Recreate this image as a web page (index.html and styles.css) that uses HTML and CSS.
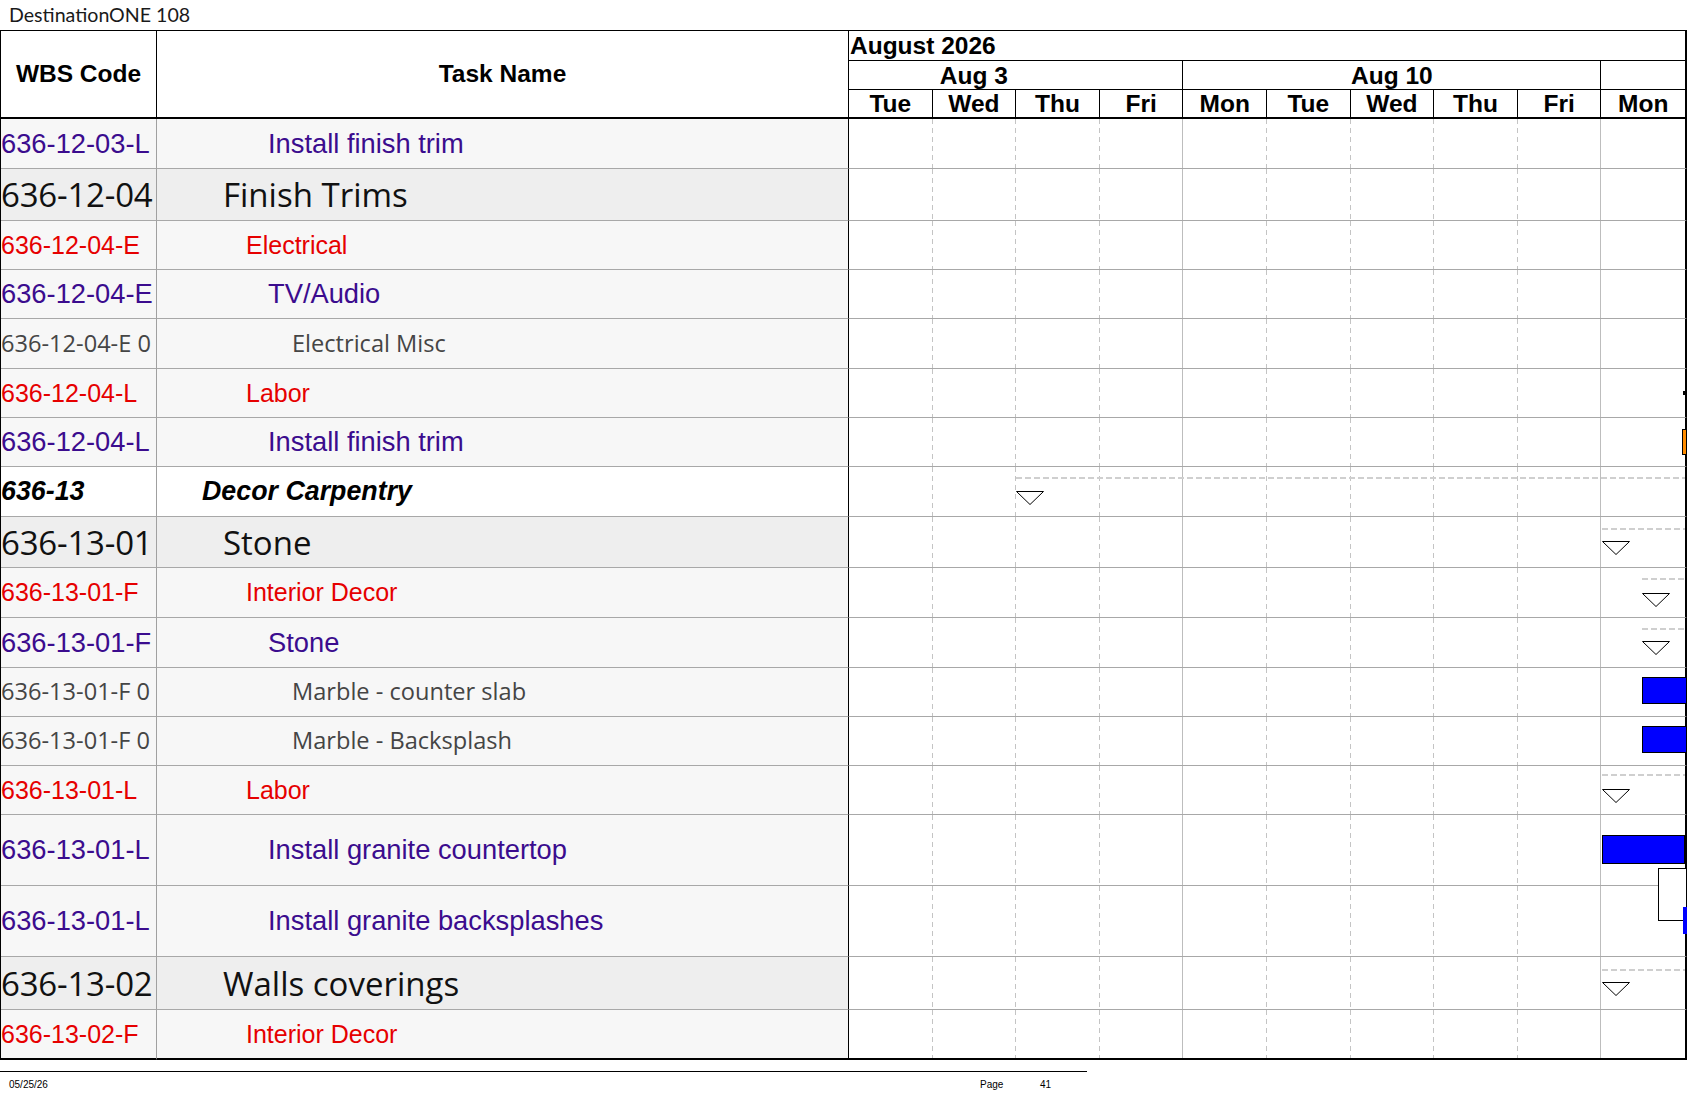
FILE: index.html
```html
<!DOCTYPE html>
<html>
<head>
<meta charset="utf-8">
<title>DestinationONE 108</title>
<link rel="stylesheet" href="styles.css">
</head>
<body>
<div class="page">
  <div class="title">DestinationONE 108</div>
  <div class="sheet">
    <div class="head">
      <div class="hcode">WBS Code</div>
      <div class="htask">Task Name</div>
      <div class="hgantt">
        <div class="month">August 2026</div>
        <div class="weeks">
          <div class="wk wk1">Aug 3</div>
          <div class="wk wk2">Aug 10</div>
          <div class="wk wk3"></div>
        </div>
        <div class="days">
          <div>Tue</div><div>Wed</div><div>Thu</div><div>Fri</div><div>Mon</div>
          <div>Tue</div><div>Wed</div><div>Thu</div><div>Fri</div><div>Mon</div>
        </div>
      </div>
    </div>

    <div class="row l3 h50">
      <div class="code">636-12-03-L</div><div class="task">Install finish trim</div>
      <div class="gantt"><div class="d"></div><div class="d"></div><div class="d"></div><div class="d w"></div><div class="d"></div><div class="d"></div><div class="d"></div><div class="d"></div><div class="d w"></div><div class="d last"></div></div>
    </div>
    <div class="row l1 h52">
      <div class="code">636-12-04</div><div class="task">Finish Trims</div>
      <div class="gantt"><div class="d"></div><div class="d"></div><div class="d"></div><div class="d w"></div><div class="d"></div><div class="d"></div><div class="d"></div><div class="d"></div><div class="d w"></div><div class="d last"></div></div>
    </div>
    <div class="row l2 h49">
      <div class="code">636-12-04-E</div><div class="task">Electrical</div>
      <div class="gantt"><div class="d"></div><div class="d"></div><div class="d"></div><div class="d w"></div><div class="d"></div><div class="d"></div><div class="d"></div><div class="d"></div><div class="d w"></div><div class="d last"></div></div>
    </div>
    <div class="row l3 h49">
      <div class="code">636-12-04-E</div><div class="task">TV/Audio</div>
      <div class="gantt"><div class="d"></div><div class="d"></div><div class="d"></div><div class="d w"></div><div class="d"></div><div class="d"></div><div class="d"></div><div class="d"></div><div class="d w"></div><div class="d last"></div></div>
    </div>
    <div class="row l4 h50">
      <div class="code">636-12-04-E 0</div><div class="task">Electrical Misc</div>
      <div class="gantt"><div class="d"></div><div class="d"></div><div class="d"></div><div class="d w"></div><div class="d"></div><div class="d"></div><div class="d"></div><div class="d"></div><div class="d w"></div><div class="d last"></div></div>
    </div>
    <div class="row l2 h49">
      <div class="code">636-12-04-L</div><div class="task">Labor</div>
      <div class="gantt"><div class="d"></div><div class="d"></div><div class="d"></div><div class="d w"></div><div class="d"></div><div class="d"></div><div class="d"></div><div class="d"></div><div class="d w"></div><div class="d last"></div>
        <div class="tick"></div>
      </div>
    </div>
    <div class="row l3 h49">
      <div class="code">636-12-04-L</div><div class="task">Install finish trim</div>
      <div class="gantt"><div class="d"></div><div class="d"></div><div class="d"></div><div class="d w"></div><div class="d"></div><div class="d"></div><div class="d"></div><div class="d"></div><div class="d w"></div><div class="d last"></div>
        <div class="orange"></div>
      </div>
    </div>
    <div class="row l0 h50">
      <div class="code">636-13</div><div class="task">Decor Carpentry</div>
      <div class="gantt"><div class="d"></div><div class="d"></div><div class="d"></div><div class="d w"></div><div class="d"></div><div class="d"></div><div class="d"></div><div class="d"></div><div class="d w"></div><div class="d last"></div>
        <div class="sum m-thu t10"></div>
        <svg class="tri m-thu t24" width="28" height="15" viewBox="0 0 28 15"><polygon points="0.5,0.5 27.5,0.5 14,13.5" fill="#fff" stroke="#000" stroke-width="1"/></svg>
      </div>
    </div>
    <div class="row l1 h51">
      <div class="code">636-13-01</div><div class="task">Stone</div>
      <div class="gantt"><div class="d"></div><div class="d"></div><div class="d"></div><div class="d w"></div><div class="d"></div><div class="d"></div><div class="d"></div><div class="d"></div><div class="d w"></div><div class="d last"></div>
        <div class="sum m-mon t11"></div>
        <svg class="tri m-mon t24" width="28" height="15" viewBox="0 0 28 15"><polygon points="0.5,0.5 27.5,0.5 14,13.5" fill="#fff" stroke="#000" stroke-width="1"/></svg>
      </div>
    </div>
    <div class="row l2 h50">
      <div class="code">636-13-01-F</div><div class="task">Interior Decor</div>
      <div class="gantt"><div class="d"></div><div class="d"></div><div class="d"></div><div class="d w"></div><div class="d"></div><div class="d"></div><div class="d"></div><div class="d"></div><div class="d w"></div><div class="d last"></div>
        <div class="sum m-mid t10"></div>
        <svg class="tri m-mid t25" width="28" height="15" viewBox="0 0 28 15"><polygon points="0.5,0.5 27.5,0.5 14,13.5" fill="#fff" stroke="#000" stroke-width="1"/></svg>
      </div>
    </div>
    <div class="row l3 h50">
      <div class="code">636-13-01-F</div><div class="task">Stone</div>
      <div class="gantt"><div class="d"></div><div class="d"></div><div class="d"></div><div class="d w"></div><div class="d"></div><div class="d"></div><div class="d"></div><div class="d"></div><div class="d w"></div><div class="d last"></div>
        <div class="sum m-mid t10"></div>
        <svg class="tri m-mid t23" width="28" height="15" viewBox="0 0 28 15"><polygon points="0.5,0.5 27.5,0.5 14,13.5" fill="#fff" stroke="#000" stroke-width="1"/></svg>
      </div>
    </div>
    <div class="row l4 h49">
      <div class="code">636-13-01-F 0</div><div class="task">Marble - counter slab</div>
      <div class="gantt"><div class="d"></div><div class="d"></div><div class="d"></div><div class="d w"></div><div class="d"></div><div class="d"></div><div class="d"></div><div class="d"></div><div class="d w"></div><div class="d last"></div>
        <div class="bar bar-mid"></div>
      </div>
    </div>
    <div class="row l4 h49">
      <div class="code">636-13-01-F 0</div><div class="task">Marble - Backsplash</div>
      <div class="gantt"><div class="d"></div><div class="d"></div><div class="d"></div><div class="d w"></div><div class="d"></div><div class="d"></div><div class="d"></div><div class="d"></div><div class="d w"></div><div class="d last"></div>
        <div class="bar bar-mid"></div>
      </div>
    </div>
    <div class="row l2 h49">
      <div class="code">636-13-01-L</div><div class="task">Labor</div>
      <div class="gantt"><div class="d"></div><div class="d"></div><div class="d"></div><div class="d w"></div><div class="d"></div><div class="d"></div><div class="d"></div><div class="d"></div><div class="d w"></div><div class="d last"></div>
        <div class="sum m-mon t8"></div>
        <svg class="tri m-mon t23" width="28" height="15" viewBox="0 0 28 15"><polygon points="0.5,0.5 27.5,0.5 14,13.5" fill="#fff" stroke="#000" stroke-width="1"/></svg>
      </div>
    </div>
    <div class="row l3 h71">
      <div class="code">636-13-01-L</div><div class="task">Install granite countertop</div>
      <div class="gantt"><div class="d"></div><div class="d"></div><div class="d"></div><div class="d w"></div><div class="d"></div><div class="d"></div><div class="d"></div><div class="d"></div><div class="d w"></div><div class="d last"></div>
        <div class="bar bar-mon"></div>
        <div class="link"></div>
      </div>
    </div>
    <div class="row l3 h71">
      <div class="code">636-13-01-L</div><div class="task">Install granite backsplashes</div>
      <div class="gantt"><div class="d"></div><div class="d"></div><div class="d"></div><div class="d w"></div><div class="d"></div><div class="d"></div><div class="d"></div><div class="d"></div><div class="d w"></div><div class="d last"></div>
        <div class="strip"></div>
      </div>
    </div>
    <div class="row l1 h53">
      <div class="code">636-13-02</div><div class="task">Walls coverings</div>
      <div class="gantt"><div class="d"></div><div class="d"></div><div class="d"></div><div class="d w"></div><div class="d"></div><div class="d"></div><div class="d"></div><div class="d"></div><div class="d w"></div><div class="d last"></div>
        <div class="sum m-mon t12"></div>
        <svg class="tri m-mon t25" width="28" height="15" viewBox="0 0 28 15"><polygon points="0.5,0.5 27.5,0.5 14,13.5" fill="#fff" stroke="#000" stroke-width="1"/></svg>
      </div>
    </div>
    <div class="row l2 h50 lastrow">
      <div class="code">636-13-02-F</div><div class="task">Interior Decor</div>
      <div class="gantt"><div class="d"></div><div class="d"></div><div class="d"></div><div class="d w"></div><div class="d"></div><div class="d"></div><div class="d"></div><div class="d"></div><div class="d w"></div><div class="d last"></div></div>
    </div>
  </div>
  <div class="footer">
    <span class="fdate">05/25/26</span>
    <span class="fpage">Page</span>
    <span class="fnum">41</span>
  </div>
</div>
</body>
</html>
```

FILE: styles.css
```css
* { box-sizing: border-box; }
html, body { margin: 0; padding: 0; background: #fff; }
body { font-family: "Liberation Sans", Arial, sans-serif; color: #000; }

.page { width: 1687px; }

.title {
  height: 30px;
  padding-left: 9px;
  font-family: Lato, "Open Sans", sans-serif;
  font-size: 19.6px;
  line-height: 30px;
  color: #1a1a1a;
}

.sheet {
  width: 1687px;
  border-top: 1px solid #000;
  border-left: 1px solid #000;
}

/* header */
.head {
  display: flex;
  height: 88px;
  border-bottom: 2px solid #000;
}
.hcode, .htask {
  display: flex;
  align-items: center;
  justify-content: center;
  font-weight: bold;
  font-size: 24.5px;
  border-right: 1px solid #000;
}
.hcode { width: 156px; }
.htask { width: 692px; }
.hgantt {
  width: 838px;
  border-right: 2px solid #000;
  display: flex;
  flex-direction: column;
  font-weight: bold;
  font-size: 24.5px;
}
.month {
  height: 30px;
  line-height: 29px;
  border-bottom: 1px solid #000;
  padding-left: 1px;
}
.weeks {
  height: 29px;
  border-bottom: 1px solid #000;
  display: grid;
  grid-template-columns: repeat(10, 1fr);
}
.wk {
  border-right: 1px solid #000;
  text-align: center;
  line-height: 29px;
  white-space: nowrap;
}
.wk1 { grid-column: 1 / 5; padding-right: 83.6px; }
.wk2 { grid-column: 5 / 10; }
.wk3 { grid-column: 10 / 11; border-right: none; }
.days {
  flex: 1;
  display: grid;
  grid-template-columns: repeat(10, 1fr);
}
.days div {
  border-right: 1px solid #000;
  text-align: center;
  line-height: 28px;
}
.days div:last-child { border-right: none; }

/* body rows */
.row { display: flex; }
.row > div { border-bottom: 1px solid #a8a8a8; }
.h49 { height: 49px; }
.h50 { height: 50px; }
.h51 { height: 51px; }
.h52 { height: 52px; }
.h53 { height: 53px; }
.h71 { height: 71px; }
.lastrow > div { border-bottom: 2px solid #000; }

.code {
  width: 156px;
  border-right: 1px solid #a0a0a0;
  background: #f7f7f7;
  display: flex;
  align-items: center;
  white-space: nowrap;
  overflow: hidden;
  line-height: 1;
}
.task {
  width: 692px;
  border-right: 1px solid #000;
  background: #f7f7f7;
  display: flex;
  align-items: center;
  white-space: nowrap;
  line-height: 1;
}
.gantt {
  width: 838px;
  border-right: 2px solid #000;
  background: #fff;
  position: relative;
  display: grid;
  grid-template-columns: repeat(10, 1fr);
}
.gantt .d {
  background: linear-gradient(#c4c4c4 55%, transparent 55%) right top / 1px 9px repeat-y;
}
.gantt .d.w {
  background: linear-gradient(#bdbdbd, #bdbdbd) right top / 1px 100% no-repeat;
}
.gantt .d.last { background: none; }

/* levels */
.l0 .code, .l0 .task { background: #fff; font-weight: bold; font-style: italic; color: #000; font-size: 26.8px; }
.l0 .task { padding-left: 45px; }

.l1 .code, .l1 .task { background: #eeeeee; font-family: "Open Sans", "Noto Sans", sans-serif; color: #111; font-size: 33px; }
.l1 .code { letter-spacing: -0.2px; }
.l1 .task { padding-left: 66px; }

.l2 .code, .l2 .task { color: #e60000; font-size: 25px; }
.l2 .task { padding-left: 89px; }

.l3 .code, .l3 .task { color: #3b0c8e; font-size: 27.3px; }
.l3 .task { padding-left: 111px; }

.l4 .code, .l4 .task { font-family: "Open Sans", "Noto Sans", sans-serif; color: #454545; font-size: 23.6px; }
.l4 .task { padding-left: 135px; }

/* gantt marks */
.sum {
  position: absolute;
  right: 0;
  height: 2px;
  background: linear-gradient(to right, #cfcfcf 65%, transparent 65%) left top / 9px 2px repeat-x;
}
.tri { position: absolute; display: block; }
.m-thu { left: 167px; }
.m-mon { left: 753px; }
.m-mid { left: 793px; }
.t8 { top: 8px; }
.t10 { top: 10px; }
.t11 { top: 11px; }
.t12 { top: 12px; }
.t23 { top: 23px; }
.t24 { top: 24px; }
.t25 { top: 25px; }

.bar {
  position: absolute;
  background: #0000ff;
  border: 1px solid #000;
}
.bar-mid { left: 793px; right: -2px; top: 9px; height: 27px; }
.bar-mon { left: 753px; width: 83px; top: 20px; height: 29px; }

.link {
  position: absolute;
  left: 809px;
  right: -2px;
  top: 53px;
  height: 53px;
  background: #fff;
  border: 1px solid #000;
  z-index: 2;
}
.strip {
  position: absolute;
  left: 834px;
  width: 4px;
  top: 21px;
  height: 27px;
  background: #0000ff;
  z-index: 3;
}
.orange {
  position: absolute;
  left: 833px;
  width: 5px;
  top: 11px;
  height: 26px;
  background: #ff8c00;
  border: 1px solid #000;
}
.tick {
  position: absolute;
  left: 834px;
  width: 3px;
  top: 22px;
  height: 4px;
  background: #000;
}

/* footer */
.footer {
  width: 1087px;
  margin-top: 11px;
  border-top: 1px solid #000;
  display: flex;
  padding-top: 7px;
  padding-left: 9px;
  font-size: 10px;
  line-height: 12px;
  color: #000;
}
.fdate { width: 971px; }
.fpage { width: 60px; }
```
